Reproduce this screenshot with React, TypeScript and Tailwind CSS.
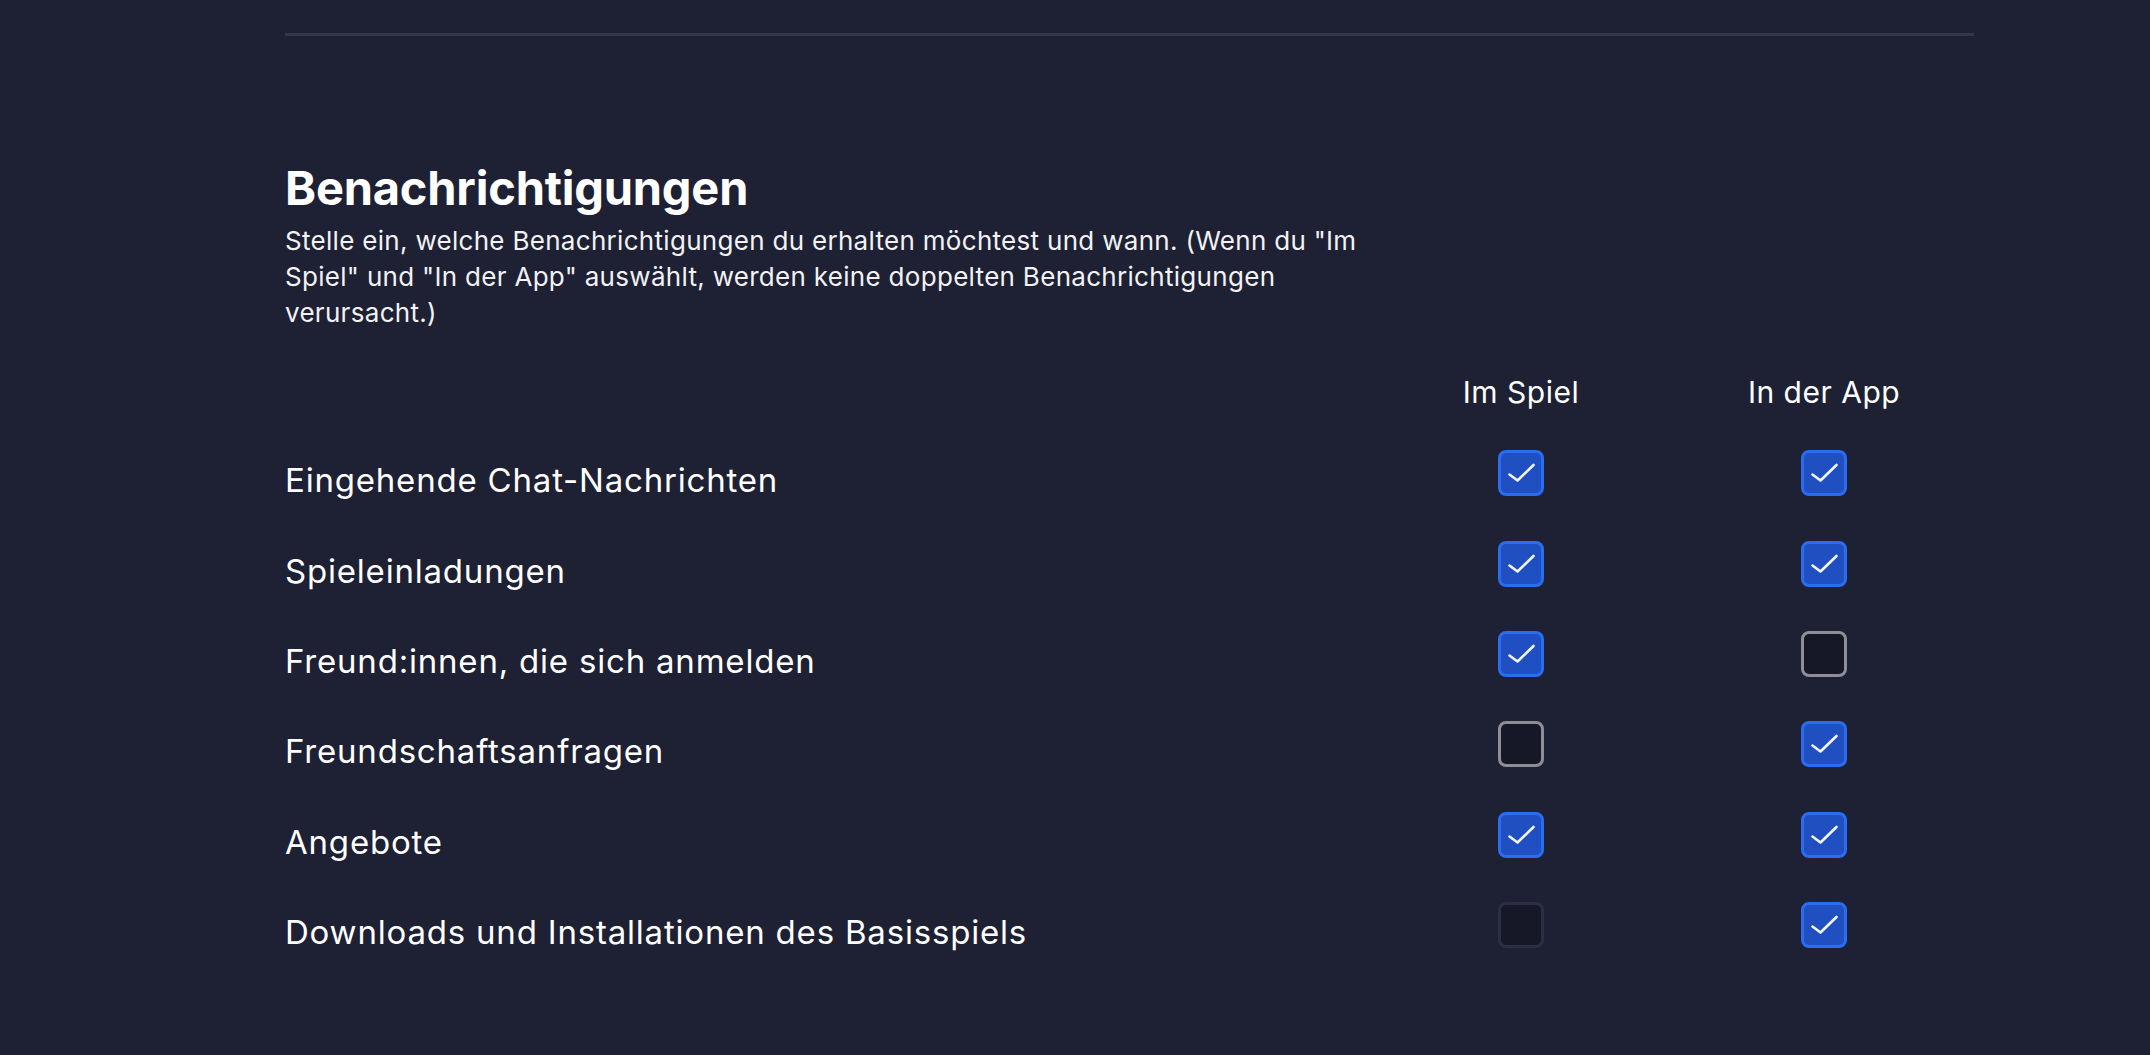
import React, { useState } from "react";

type Mode = "on" | "off" | "disabled";

const rows: { label: string; game: Mode; app: Mode }[] = [
  { label: "Eingehende Chat-Nachrichten", game: "on", app: "on" },
  { label: "Spieleinladungen", game: "on", app: "on" },
  { label: "Freund:innen, die sich anmelden", game: "on", app: "off" },
  { label: "Freundschaftsanfragen", game: "off", app: "on" },
  { label: "Angebote", game: "on", app: "on" },
  { label: "Downloads und Installationen des Basisspiels", game: "disabled", app: "on" },
];

function Check({ initial }: { initial: Mode }) {
  const [mode, setMode] = useState<Mode>(initial);
  const disabled = mode === "disabled";
  const checked = mode === "on";
  return (
    <button
      type="button"
      disabled={disabled}
      onClick={() => setMode(checked ? "off" : "on")}
      className={
        checked
          ? "h-[46px] w-[46px] rounded-[8px] border-[3px] border-[#2c6cf0] bg-[#1f4fc0]"
          : disabled
          ? "h-[46px] w-[46px] rounded-[8px] border-[3px] border-[#2c2f44] bg-[#161827]"
          : "h-[46px] w-[46px] rounded-[8px] border-[3px] border-[#8d8e98] bg-[#161827]"
      }
    >
      {checked && (
        <svg width="40" height="40" viewBox="0 0 40 40" fill="none" className="block">
          <path d="M8.5 21.5 L16.5 27.5 L32.5 12" stroke="#f4f6ff" strokeWidth="2.6" strokeLinecap="round" strokeLinejoin="round" />
        </svg>
      )}
    </button>
  );
}

export default function App() {
  return (
    <div className="min-h-screen w-full bg-[#1e2033] text-white" style={{ fontFamily: "Inter, 'Noto Sans', sans-serif" }}>
      <div className="ml-[285px] w-[1689px] pt-[33px]">
        <div className="h-[3px] w-full bg-[#33364a]" />
        <h2 className="mt-[124px] text-[47px] font-bold leading-[56px] tracking-[-0.2px]">Benachrichtigungen</h2>
        <p className="mt-[7px] max-w-[1100px] text-[26px] leading-[36px] tracking-[0.3px] text-[#f2f2f5]">
          Stelle ein, welche Benachrichtigungen du erhalten möchtest und wann. (Wenn du "Im Spiel" und "In der App" auswählt, werden keine doppelten Benachrichtigungen verursacht.)
        </p>
        <div className="mt-[41px] flex items-center">
          <div className="flex-1" />
          <div className="w-[306px] text-center text-[30px] leading-[40px] tracking-[0.5px]">Im Spiel</div>
          <div className="w-[300px] text-center text-[30px] leading-[40px] tracking-[0.5px]">In der App</div>
        </div>
        <div className="mt-[16px] flex flex-col">
          {rows.map((r) => (
            <div key={r.label} className="flex h-[90.4px] items-center">
              <div className="flex-1 pt-[14px] text-[33px] leading-[40px] tracking-[0.8px]">{r.label}</div>
              <div className="flex w-[306px] justify-center">
                <Check initial={r.game} />
              </div>
              <div className="flex w-[300px] justify-center">
                <Check initial={r.app} />
              </div>
            </div>
          ))}
        </div>
      </div>
    </div>
  );
}
